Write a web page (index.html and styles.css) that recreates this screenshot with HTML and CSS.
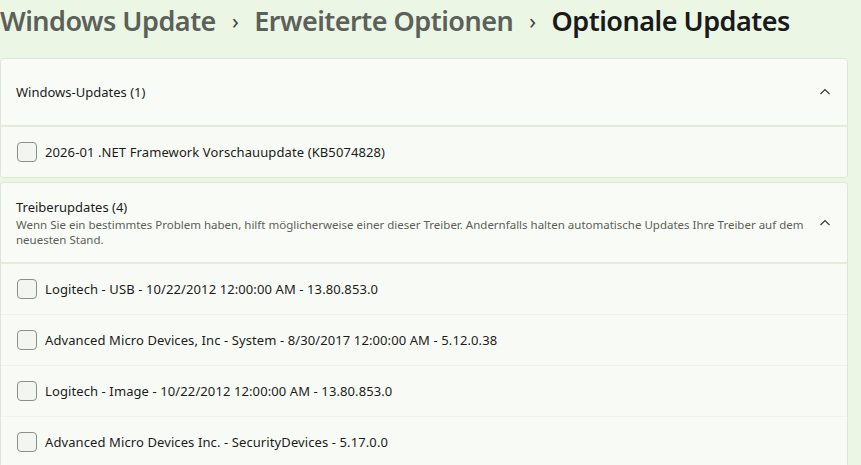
FILE: index.html
```html
<!DOCTYPE html>
<html lang="de">
<head>
<meta charset="utf-8">
<link rel="stylesheet" href="styles.css">
</head>
<body>
<div class="page">
  <h1 class="crumbs">
    <span class="crumb">Windows Update</span>
    <span class="sep">›</span>
    <span class="crumb">Erweiterte Optionen</span>
    <span class="sep">›</span>
    <span class="crumb current">Optionale Updates</span>
  </h1>

  <section class="card">
    <div class="card-head head-simple">
      <div class="head-text"><div class="head-title">Windows-Updates (1)</div></div>
      <svg class="chev" width="12" height="8" viewBox="0 0 12 8"><path d="M1.5 6 L6 1.5 L10.5 6" fill="none" stroke="#333" stroke-width="1.1"/></svg>
    </div>
    <div class="row"><span class="box"></span><span class="label">2026-01 .NET Framework Vorschauupdate (KB5074828)</span></div>
  </section>

  <section class="card">
    <div class="card-head head-desc">
      <div class="head-text">
        <div class="head-title">Treiberupdates (4)</div>
        <div class="head-sub">Wenn Sie ein bestimmtes Problem haben, hilft möglicherweise einer dieser Treiber. Andernfalls halten automatische Updates Ihre Treiber auf dem neuesten Stand.</div>
      </div>
      <svg class="chev" width="12" height="8" viewBox="0 0 12 8"><path d="M1.5 6 L6 1.5 L10.5 6" fill="none" stroke="#333" stroke-width="1.1"/></svg>
    </div>
    <div class="row"><span class="box"></span><span class="label">Logitech - USB - 10/22/2012 12:00:00 AM - 13.80.853.0</span></div>
    <div class="row"><span class="box"></span><span class="label">Advanced Micro Devices, Inc - System - 8/30/2017 12:00:00 AM - 5.12.0.38</span></div>
    <div class="row"><span class="box"></span><span class="label">Logitech - Image - 10/22/2012 12:00:00 AM - 13.80.853.0</span></div>
    <div class="row"><span class="box"></span><span class="label">Advanced Micro Devices Inc. - SecurityDevices - 5.17.0.0</span></div>
  </section>
</div>
</body>
</html>
```

FILE: styles.css
```css
html, body {
  margin: 0;
  padding: 0;
  background: #ebf6e5;
  overflow: hidden;
}
body {
  font-family: "Noto Sans", "Open Sans", sans-serif;
  color: #1b1b1b;
}
.page {
  width: 848px;
  height: 465px;
}
.crumbs {
  margin: 0;
  height: 58px;
  display: flex;
  align-items: flex-start;
  font-size: 27px;
  font-weight: 600;
  line-height: 41px;
  color: #5b6159;
  white-space: nowrap;
  letter-spacing: -0.5px;
}
.crumb.current { color: #1a1a1a; }
.sep {
  font-size: 22px;
  font-weight: 400;
  margin: 0 16px;
  color: #3e433d;
}
.card {
  background: #f9fcf6;
  border: 1px solid #dde7d7;
  border-radius: 4px;
  margin-bottom: 4px;
  overflow: hidden;
}
.card-head {
  display: flex;
  align-items: center;
  padding: 0 15px;
  border-bottom: 2px solid #e2ecdc;
}
.head-simple { height: 66px; }
.head-desc { height: 79px; }
.head-text { flex: 1; }
.head-title {
  font-size: 13px;
  line-height: 19px;
}
.head-sub {
  font-size: 11.5px;
  line-height: 15px;
  color: #5a5f58;
  padding-right: 14px;
}
.chev { margin-right: 1px; flex: none; }
.row {
  display: flex;
  align-items: center;
  height: 50px;
  padding-left: 16px;
  background: #f8fbf5;
  border-top: 1px solid #edf6e6;
}
.card-head + .row { border-top: none; }
.box {
  width: 18px;
  height: 18px;
  border: 1px solid #8a8f88;
  border-radius: 4px;
  background: #f3f5f1;
  margin-right: 8px;
  flex: none;
}
.label {
  font-size: 13px;
  letter-spacing: 0.1px;
  white-space: nowrap;
}
```
